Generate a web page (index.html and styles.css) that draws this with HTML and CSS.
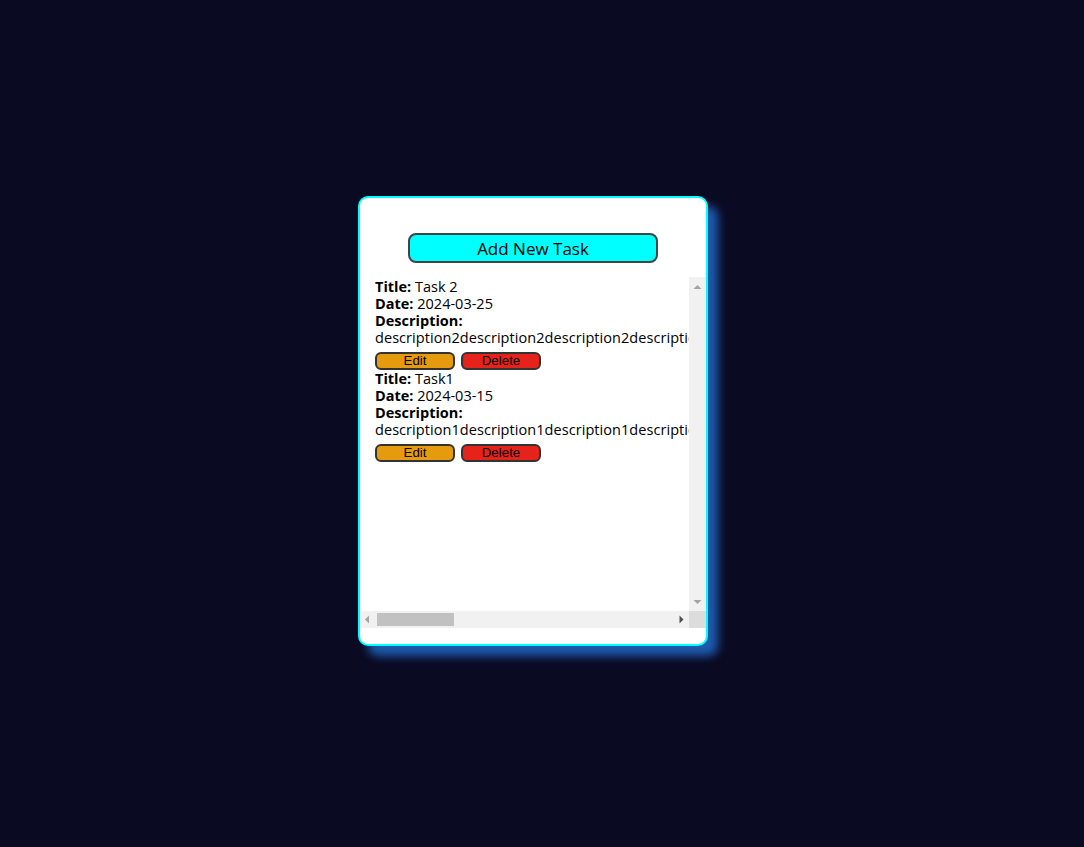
FILE: index.html
```html
<!DOCTYPE html>
<html>
<head>
<meta charset="utf-8">
<link rel="stylesheet" href="styles.css">
</head>
<body>
<div class="page">
  <div class="card">
    <div class="header">
      <button class="add-btn">Add New Task</button>
    </div>
    <div class="scroller">
      <div class="list">
        <div class="task">
          <div><b>Title:</b> Task 2</div>
          <div><b>Date:</b> 2024-03-25</div>
          <div><b>Description:</b></div>
          <div class="desc">description2description2description2description2description2description2description2description2description2description2description2description2description2description2description2</div>
          <div class="actions">
            <button class="btn edit">Edit</button>
            <button class="btn delete">Delete</button>
          </div>
        </div>
        <div class="task">
          <div><b>Title:</b> Task1</div>
          <div><b>Date:</b> 2024-03-15</div>
          <div><b>Description:</b></div>
          <div class="desc">description1description1description1description1description1description1description1description1description1description1description1description1description1description1description1</div>
          <div class="actions">
            <button class="btn edit">Edit</button>
            <button class="btn delete">Delete</button>
          </div>
        </div>
      </div>
      <div class="vbar">
        <div class="sb-btn"><svg width="17" height="17" viewBox="0 0 17 17"><path d="M4.5 12H12.5L8.5 8z" fill="#a3a3a3"/></svg></div>
        <div class="sb-track"></div>
        <div class="sb-btn"><svg width="17" height="17" viewBox="0 0 17 17"><path d="M4.5 6H12.5L8.5 10z" fill="#a3a3a3"/></svg></div>
      </div>
      <div class="hbar">
        <div class="sb-btn"><svg width="17" height="17" viewBox="0 0 17 17"><path d="M5 8.5L9 4.5V12.5z" fill="#a3a3a3"/></svg></div>
        <div class="sb-track h"><div class="thumb"></div></div>
        <div class="sb-btn"><svg width="17" height="17" viewBox="0 0 17 17"><path d="M11.5 8.5L7.5 4.5V12.5z" fill="#505050"/></svg></div>
      </div>
      <div class="corner"></div>
    </div>
  </div>
</div>
</body>
</html>
```

FILE: styles.css
```css
html, body {
  margin: 0;
  padding: 0;
  background: #0a0a22;
}
.page {
  height: 100vh;
  box-sizing: border-box;
  padding: 0 18px 5px 0;
  display: flex;
  align-items: center;
  justify-content: center;
}
.card {
  width: 350px;
  height: 450px;
  box-sizing: border-box;
  background: #fff;
  border: 2px solid #00ffff;
  border-radius: 10px;
  box-shadow: 10px 10px 10px #1e5bb0;
  display: flex;
  flex-direction: column;
  font-family: "Open Sans", "DejaVu Sans", sans-serif;
  font-size: 14.5px;
  line-height: 17px;
  color: #000;
}
.header {
  display: flex;
  justify-content: center;
  padding-top: 35px;
  padding-bottom: 14px;
}
.add-btn {
  width: 250px;
  height: 30px;
  background: #00ffff;
  border: 2px solid #444;
  border-radius: 8px;
  font-family: "Open Sans", "DejaVu Sans", sans-serif;
  font-size: 17px;
  color: #000;
  padding: 0;
}
.scroller {
  height: 351px;
  display: grid;
  grid-template-columns: 1fr 17px;
  grid-template-rows: 1fr 17px;
}
.list {
  overflow: hidden;
  padding: 1px 0 0 15px;
  min-width: 0;
  min-height: 0;
}
.vbar {
  display: flex;
  flex-direction: column;
  background: #f1f1f1;
}
.hbar {
  display: flex;
  background: #f1f1f1;
}
.sb-btn {
  width: 17px;
  height: 17px;
  flex: none;
}
.sb-btn svg {
  display: block;
}
.sb-track {
  flex: 1;
}
.sb-track.h {
  display: flex;
  align-items: center;
}
.thumb {
  width: 77px;
  height: 13px;
  background: #c1c1c1;
}
.corner {
  background: #dcdcdc;
}
.task {
  width: max-content;
}
.desc {
  white-space: nowrap;
  letter-spacing: 0.06px;
}
.actions {
  display: flex;
  gap: 6px;
  margin-top: 6px;
}
.btn {
  width: 80px;
  height: 18px;
  border: 2px solid #333;
  border-radius: 6px;
  font-family: "Liberation Sans", Arial, sans-serif;
  font-size: 13.33px;
  padding: 0;
  line-height: 14px;
  color: #000;
}
.edit { background: #e69a0e; }
.delete { background: #e6231b; }
```
